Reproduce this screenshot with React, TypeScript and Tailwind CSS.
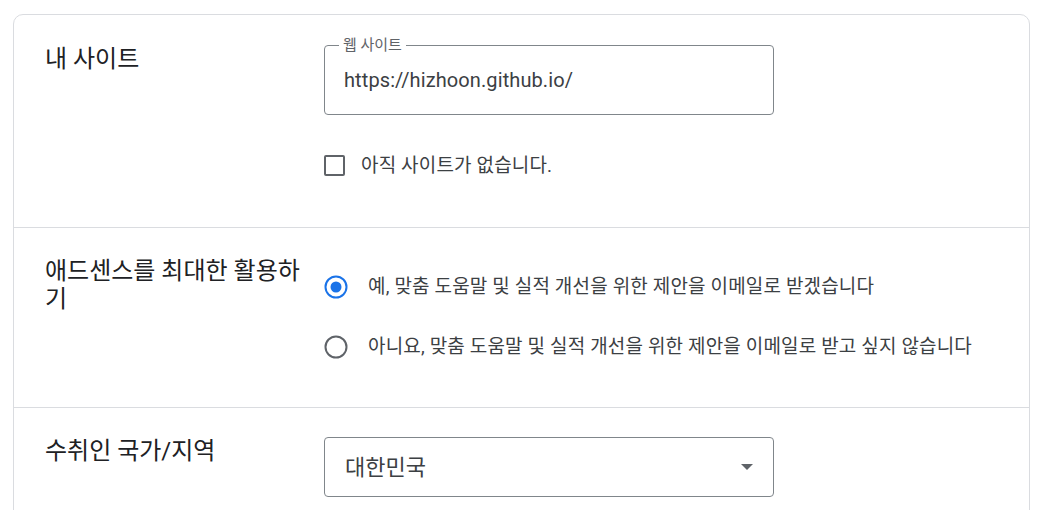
const font = { fontFamily: '"Roboto", "Noto Sans CJK KR", sans-serif' }

const Row = ({ label, children, last, top }: { label: string; children: React.ReactNode; last?: boolean; top: string }) => {
    return (
        <div className={`flex flex-row pl-[31px] ${top} ${last ? '' : 'border-b border-[#dadce0]'}`}>
            {/* Label column */ }
            <div className="w-[279px] shrink-0">
                <div className="w-[265px] text-[24px] leading-[28px] text-[#202124]">{label}</div>
            </div>
            {/* Content column */ }
            <div className="flex flex-col">{children}</div>
        </div>
    )
}

const Radio = ({ checked, text }: { checked?: boolean; text: string }) => {
    return (
        <div className="flex flex-row items-center h-[60px]">
            <svg width="24" height="24" viewBox="0 0 24 24" className="shrink-0">
                <circle cx="12" cy="12" r="10.5" fill="none" stroke={checked ? '#1a73e8' : '#5f6368'} strokeWidth="2" />
                {checked && <circle cx="12" cy="12" r="5.5" fill="#1a73e8" />}
            </svg>
            <span className="ml-[20px] text-[19px] leading-[24px] tracking-[0.15px] text-[#3c4043]">{text}</span>
        </div>
    )
}

export default function App() {
    return (
        <div className="bg-white w-[1040px] h-[510px] overflow-hidden pt-[14px] pl-[13px] pr-[10px]" style={font}>
            <div className="border border-[#dadce0] rounded-[10px] h-[520px]">
                {/* My site */ }
                <Row label="내 사이트" top="pt-[30px]">
                    <div className="relative w-[450px] h-[70px] border border-[#80868b] rounded-[4px] flex items-center px-[19px]">
                        <span className="absolute -top-[11px] left-[14px] bg-white px-[4px] text-[15px] leading-[20px] text-[#5f6368]">웹 사이트</span>
                        <span className="text-[20px] tracking-[0.1px] text-[#3c4043]">https://hizhoon.github.io/</span>
                    </div>
                    <div className="flex flex-row items-center h-[21px] mt-[40px] mb-[51px]">
                        <div className="w-[21px] h-[21px] border-2 border-[#5f6368] rounded-[2px]"></div>
                        <span className="ml-[16px] text-[19px] leading-[21px] tracking-[0.15px] text-[#3c4043]">아직 사이트가 없습니다.</span>
                    </div>
                </Row>

                {/* Get the most out of AdSense */ }
                <Row label="애드센스를 최대한 활용하기" top="pt-[29px]">
                    <div className="flex flex-col pb-[30px]">
                        <Radio checked text="예, 맞춤 도움말 및 실적 개선을 위한 제안을 이메일로 받겠습니다" />
                        <Radio text="아니요, 맞춤 도움말 및 실적 개선을 위한 제안을 이메일로 받고 싶지 않습니다" />
                    </div>
                </Row>

                {/* Payee country */ }
                <Row label="수취인 국가/지역" top="pt-[29px]" last>
                    <div className="w-[450px] h-[60px] border border-[#80868b] rounded-[4px] flex flex-row items-center justify-between pl-[20px] pr-[20px]">
                        <span className="text-[22px] text-[#3c4043]">대한민국</span>
                        <svg width="12" height="6" viewBox="0 0 12 6">
                            <path d="M0 0 L12 0 L6 6 Z" fill="#5f6368" />
                        </svg>
                    </div>
                </Row>
            </div>
        </div>
    )
}
